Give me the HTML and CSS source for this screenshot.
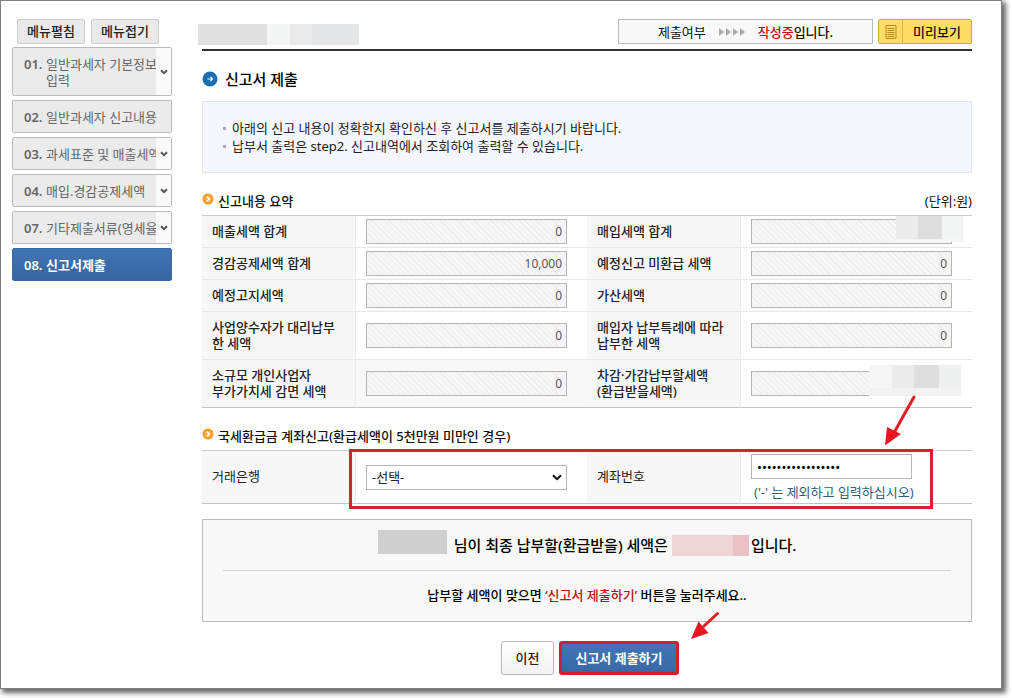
FILE: index.html
```html
<!DOCTYPE html>
<html lang="ko">
<head>
<meta charset="utf-8">
<title>신고서 제출</title>
<link rel="stylesheet" href="styles.css">
</head>
<body>
<div class="panel">
  <aside class="sidebar">
    <div class="menu-tools">
      <button type="button" class="tool">메뉴펼침</button>
      <button type="button" class="tool">메뉴접기</button>
    </div>
    <nav class="menu">
      <div class="item"><a href="#"><b>01.</b><span>일반과세자 기본정보<br>입력</span></a><button type="button" class="toggle" aria-label="펼치기"><svg viewBox="0 0 8 6"><path d="M1 1.2 4 4.2 7 1.2"/></svg></button></div>
      <div class="item"><a href="#"><b>02.</b><span>일반과세자 신고내용</span></a></div>
      <div class="item"><a href="#"><b>03.</b><span>과세표준 및 매출세액</span></a><button type="button" class="toggle" aria-label="펼치기"><svg viewBox="0 0 8 6"><path d="M1 1.2 4 4.2 7 1.2"/></svg></button></div>
      <div class="item"><a href="#"><b>04.</b><span>매입.경감공제세액</span></a><button type="button" class="toggle" aria-label="펼치기"><svg viewBox="0 0 8 6"><path d="M1 1.2 4 4.2 7 1.2"/></svg></button></div>
      <div class="item"><a href="#"><b>07.</b><span>기타제출서류(영세율</span></a><button type="button" class="toggle" aria-label="펼치기"><svg viewBox="0 0 8 6"><path d="M1 1.2 4 4.2 7 1.2"/></svg></button></div>
      <div class="item current"><a href="#"><b>08.</b><span>신고서제출</span></a></div>
    </nav>
  </aside>

  <main class="main">
    <header class="top">
      <div class="mask mask-name"></div>
      <div class="status">
        <span>제출여부</span>
        <svg class="steps" viewBox="0 0 28 8"><path d="M1 0v8l5-4zM8 0v8l5-4zM15 0v8l5-4zM22 0v8l5-4z"/></svg>
        <strong><em>작성중</em>입니다.</strong>
      </div>
      <button type="button" class="preview">
        <span class="preview-icon"><svg viewBox="0 0 12 14"><path d="M1 .5h10v13H1zM2.500 3.500h7M2.500 5.500h7M2.500 7.500h7M2.500 9.500h7M2.500 11.500h7"/></svg></span>
        <span class="preview-text">미리보기</span>
      </button>
    </header>

    <h1 class="title">
      <svg viewBox="0 0 16 16"><circle cx="8" cy="8" r="7.500" fill="#1a6fb0"/><path d="M5.500 8h5M8.500 6l2 2-2 2" fill="none" stroke="#fff" stroke-width="1.200"/></svg>
      신고서 제출
    </h1>

    <ul class="notice">
      <li>아래의 신고 내용이 정확한지 확인하신 후 신고서를 제출하시기 바랍니다.</li>
      <li>납부서 출력은 step2. 신고내역에서 조회하여 출력할 수 있습니다.</li>
    </ul>

    <div class="section-head">
      <h2><svg viewBox="0 0 12 12"><circle cx="6" cy="6" r="5.500" fill="#f29a22"/><circle cx="6" cy="6" r="3.500" fill="#f8b04a"/><path d="M5 3.800 7.300 6 5 8.200" fill="none" stroke="#fff" stroke-width="1.500"/></svg>신고내용 요약</h2>
      <span class="unit">(단위:원)</span>
    </div>
    <div class="block">
      <table class="form">
        <tr><th><label for="a1">매출세액 합계</label></th><td><input id="a1" class="amount" value="0" readonly></td>
            <th><label for="b1">매입세액 합계</label></th><td><input id="b1" class="amount" readonly></td></tr>
        <tr><th><label for="a2">경감공제세액 합계</label></th><td><input id="a2" class="amount" value="10,000" readonly></td>
            <th><label for="b2">예정신고 미환급 세액</label></th><td><input id="b2" class="amount" value="0" readonly></td></tr>
        <tr><th><label for="a3">예정고지세액</label></th><td><input id="a3" class="amount" value="0" readonly></td>
            <th><label for="b3">가산세액</label></th><td><input id="b3" class="amount" value="0" readonly></td></tr>
        <tr class="tall"><th><label for="a4">사업양수자가 대리납부<br>한 세액</label></th><td><input id="a4" class="amount" value="0" readonly></td>
            <th><label for="b4">매입자 납부특례에 따라<br>납부한 세액</label></th><td><input id="b4" class="amount" value="0" readonly></td></tr>
        <tr class="tall"><th><label for="a5">소규모 개인사업자<br>부가가치세 감면 세액</label></th><td class="shade"><input id="a5" class="amount" value="0" readonly></td>
            <th><label for="b5">차감·가감납부할세액<br>(환급받을세액)</label></th><td><input id="b5" class="amount" readonly></td></tr>
      </table>
      <div class="mask mask-purchase"></div>
      <div class="mask mask-total"></div>
    </div>

    <div class="section-head">
      <h2><svg viewBox="0 0 12 12"><circle cx="6" cy="6" r="5.500" fill="#f29a22"/><circle cx="6" cy="6" r="3.500" fill="#f8b04a"/><path d="M5 3.800 7.300 6 5 8.200" fill="none" stroke="#fff" stroke-width="1.500"/></svg>국세환급금 계좌신고(환급세액이 5천만원 미만인 경우)</h2>
    </div>
    <div class="block">
      <table class="form account">
        <tr><th><label for="bank">거래은행</label></th>
            <td><div class="select-wrap"><select id="bank"><option>-선택-</option></select><svg viewBox="0 0 10 7"><path d="M1 1.200 5 5.200 9 1.200"/></svg></div></td>
            <th><label for="account">계좌번호</label></th>
            <td><input id="account" class="secret" type="password" value="00000000000000000"><p class="hint">('-' 는 제외하고 입력하십시오)</p></td></tr>
      </table>
      <div class="highlight"></div>
      <svg class="arrow arrow-account" viewBox="0 0 34 52"><path class="shaft" d="M31 3 12 37"/><path class="head" d="M2 51.500 4 33l14 7z"/></svg>
    </div>

    <section class="summary">
      <p class="result"><span class="mask mask-payer"></span><span>님이 최종 납부할(환급받을) 세액은</span><span class="mask mask-amount"></span><span>입니다.</span></p>
      <p class="guide">납부할 세액이 맞으면 <em>‘신고서 제출하기’</em> 버튼을 눌러주세요..</p>
    </section>

    <div class="actions">
      <button type="button" class="prev">이전</button>
      <button type="button" class="submit">신고서 제출하기</button>
      <svg class="arrow arrow-submit" viewBox="0 0 30 30"><path class="shaft" d="M27.500 2.500 14 15"/><path class="head" d="M1 28 8.500 10.500l10 11.500z"/></svg>
    </div>
  </main>
</div>
</body>
</html>
```
FILE: styles.css
```css
* { box-sizing: border-box; }
body {
  margin: 0;
  background: #fff;
  color: #222;
  font: 13px/16px "Noto Sans", "Noto Sans CJK KR", sans-serif;
}
button, input, select { font: inherit; color: inherit; margin: 0; }
button { cursor: pointer; padding: 0; }
a { color: inherit; text-decoration: none; }
em { font-style: normal; color: #b91116; }
h1, h2, p, ul { margin: 0; padding: 0; }

.panel {
  display: grid;
  grid-template-columns: 160px minmax(0, 1fr);
  column-gap: 30px;
  margin: 0 10px 10px 0;
  padding: 18px 29px 13px 11px;
  border: 1px solid #808080;
  background: #fff;
  box-shadow: 3px 3px 5px 1px rgba(0, 0, 0, .6);
}

/* side menu */
.menu-tools { display: flex; gap: 6px; padding-left: 5px; margin-bottom: 3px; }
.tool {
  width: 68px;
  height: 25px;
  padding-bottom: 2px;
  border: 1px solid #ccc;
  border-radius: 2px;
  background: #e9e9e9;
  font-weight: 500;
}
.menu { display: grid; grid-template-columns: minmax(0, 1fr); gap: 4px; }
.item {
  display: flex;
  min-height: 33px;
  border: 1px solid #bbb;
  border-radius: 2px;
  background: #ebebeb;
  color: #666;
}
.item a {
  flex: 1;
  min-width: 0;
  display: flex;
  align-items: center;
  padding: 8px 0 7px 11px;
  overflow: hidden;
  white-space: nowrap;
}
.item b { flex: none; width: 22px; align-self: flex-start; font-weight: 600; }
.toggle {
  flex: none;
  width: 15px;
  border: 0;
  background: #fafafa;
  display: grid;
  place-items: center;
}
.toggle svg { width: 8px; height: 6px; fill: none; stroke: #555; stroke-width: 2; }
.current {
  border-color: #3a69a6;
  background: linear-gradient(#4075b5, #3765a0);
  color: #fff;
  font-weight: 700;
}

/* header */
.top {
  display: flex;
  align-items: center;
  gap: 5px;
  height: 32px;
  padding-bottom: 5px;
  border-bottom: 2px solid #303236;
}
.mask-name {
  width: 161px;
  height: 21px;
  margin: 5px auto 0 -4px;
  background: linear-gradient(90deg, #e2e1e2 0 69px, #f4f6f5 69px 92px, #eaeaea 92px 114px, #e5e6e7 114px);
}
.status {
  width: 255px;
  height: 25px;
  display: flex;
  align-items: center;
  justify-content: center;
  gap: 12px;
  border: 1px solid #bbb;
  background: #f8f8f8;
  color: #111;
}
.status strong { font-weight: 500; }
.steps { width: 28px; height: 8px; fill: #aaa; }
.preview {
  display: flex;
  width: 94px;
  height: 25px;
  border: 1px solid #d3a93c;
  border-radius: 2px;
  background: #ffdc66;
  color: #111;
  font-weight: 500;
}
.preview-icon {
  width: 24px;
  height: 100%;
  display: grid;
  place-items: center;
  border-right: 1px solid #e0b747;
}
.preview-icon svg { width: 12px; height: 14px; fill: none; stroke: #b98b20; }
.preview-text { flex: 1; align-self: center; }

.title {
  display: flex;
  align-items: center;
  gap: 7px;
  height: 20px;
  margin: 18px 0 12px;
  color: #000;
  font-size: 15px;
  line-height: 20px;
  font-weight: 500;
}
.title svg { width: 16px; height: 16px; margin-bottom: 1px; }

.notice {
  padding: 17px 20px;
  border: 1px solid #e0e5ee;
  background: #f4f7fd;
  list-style: none;
  line-height: 18px;
}
.notice li { display: flex; align-items: center; gap: 6px; }
.notice li::before { content: ""; width: 3px; height: 3px; background: #aaa; }

/* sections */
.section-head {
  display: flex;
  justify-content: space-between;
  align-items: center;
  height: 24px;
  margin: 16px 0 2px;
  color: #111;
}
.section-head h2 {
  display: flex;
  align-items: center;
  gap: 4px;
  font-size: 13px;
  line-height: 16px;
  font-weight: 500;
}
.section-head svg { width: 12px; height: 12px; margin-bottom: 5px; }

.block { position: relative; }
.form {
  width: 100%;
  table-layout: fixed;
  border-spacing: 0;
  border-top: 1px solid #ccc;
}
.form th, .form td {
  height: 32px;
  padding: 3px 0 3px 10px;
  border-bottom: 1px solid #e7e7e7;
  text-align: left;
}
.form th {
  width: 20%;
  padding: 2px 0 4px 10px;
  border-right: 1px solid #ececec;
  background: #f7f7f7;
  font-weight: 500;
}
.form td { width: 30%; }
.form .tall th, .form .tall td { height: 48px; }
.form tr:last-child th, .form tr:last-child td { border-bottom-color: #c4c4c4; }
.form .shade { background: #f8f8f8; }
.account th { font-weight: 400; }
.amount, .secret, select {
  display: block;
  height: 25px;
  border: 1px solid #b5b5b5;
  border-radius: 0;
  outline: 0;
}
.amount {
  width: 91%;
  padding: 0 4px;
  background: repeating-linear-gradient(45deg, #f6f6f6 0 3px, #ededed 3px 4px);
  color: #555;
  font-size: 12px;
  text-align: right;
}
.select-wrap { position: relative; width: 91%; }
.select-wrap svg {
  position: absolute;
  right: 5px;
  top: 9px;
  width: 10px;
  height: 7px;
  fill: none;
  stroke: #111;
  stroke-width: 2;
  pointer-events: none;
}
select { width: 100%; padding: 0 5px; appearance: none; background: #fff; }
.secret { width: 73%; padding: 0 5px; background: #fff; color: #000; }
.hint { margin: 5px 0 0 3px; color: #2b5f85; white-space: nowrap; }

.mask { display: block; }
.mask-purchase {
  position: absolute;
  top: 1px;
  right: 9px;
  width: 67px;
  height: 26px;
  background: linear-gradient(transparent 0 23px, #f6f6f6 23px), linear-gradient(90deg, #ececec 0 22px, #dedede 22px 46px, #f2f3f3 46px);
}
.mask-total {
  position: absolute;
  bottom: 12px;
  right: 11px;
  width: 92px;
  height: 31px;
  background: linear-gradient(transparent 0 23px, #f2f2f2 23px), linear-gradient(90deg, #f6f6f6 0 23px, #ebebeb 23px 45px, #dedede 45px 70px, #eff0f0 70px);
}
.highlight {
  position: absolute;
  top: -1px;
  right: 39px;
  bottom: -5px;
  left: 147px;
  border: 3px solid #d8232a;
  pointer-events: none;
}
.arrow { position: absolute; }
.shaft { fill: none; stroke: #e21d25; stroke-width: 3; stroke-linecap: round; }
.head { fill: #e8171f; }
.arrow-account { width: 34px; height: 52px; right: 55px; top: -56px; }

/* summary */
.summary {
  margin-top: 15px;
  padding: 0 20px;
  border: 1px solid #bbb;
  background: #f8f8f8;
  color: #000;
  font-weight: 500;
}
.result {
  display: flex;
  align-items: center;
  justify-content: center;
  height: 51px;
  border-bottom: 1px solid #d2d2d2;
  font-size: 15px;
}
.mask-payer { width: 69px; height: 24px; margin: 0 7px 6px 0; background: #cfcfcf; }
.mask-amount {
  width: 77px;
  height: 21px;
  margin: 0 2px 0 4px;
  background: linear-gradient(90deg, #f0d5d6 0 61px, #ecc1c5 61px);
}
.guide { height: 50px; line-height: 48px; text-align: center; }

.actions {
  position: relative;
  display: flex;
  justify-content: center;
  gap: 5px;
  margin-top: 19px;
  padding-left: 6px;
}
.actions button { height: 34px; border-radius: 3px; font-weight: 500; }
.prev {
  width: 53px;
  border: 1px solid #b8b8b8;
  background: linear-gradient(#fff, #f3f3f3);
}
.submit {
  width: 120px;
  border: 3px solid #cf202b;
  background: linear-gradient(#4075b8, #3a68a4);
  color: #fff;
}
.actions .submit { font-weight: 700; }
.arrow-submit { width: 30px; height: 30px; left: 488px; top: -30px; }
```
